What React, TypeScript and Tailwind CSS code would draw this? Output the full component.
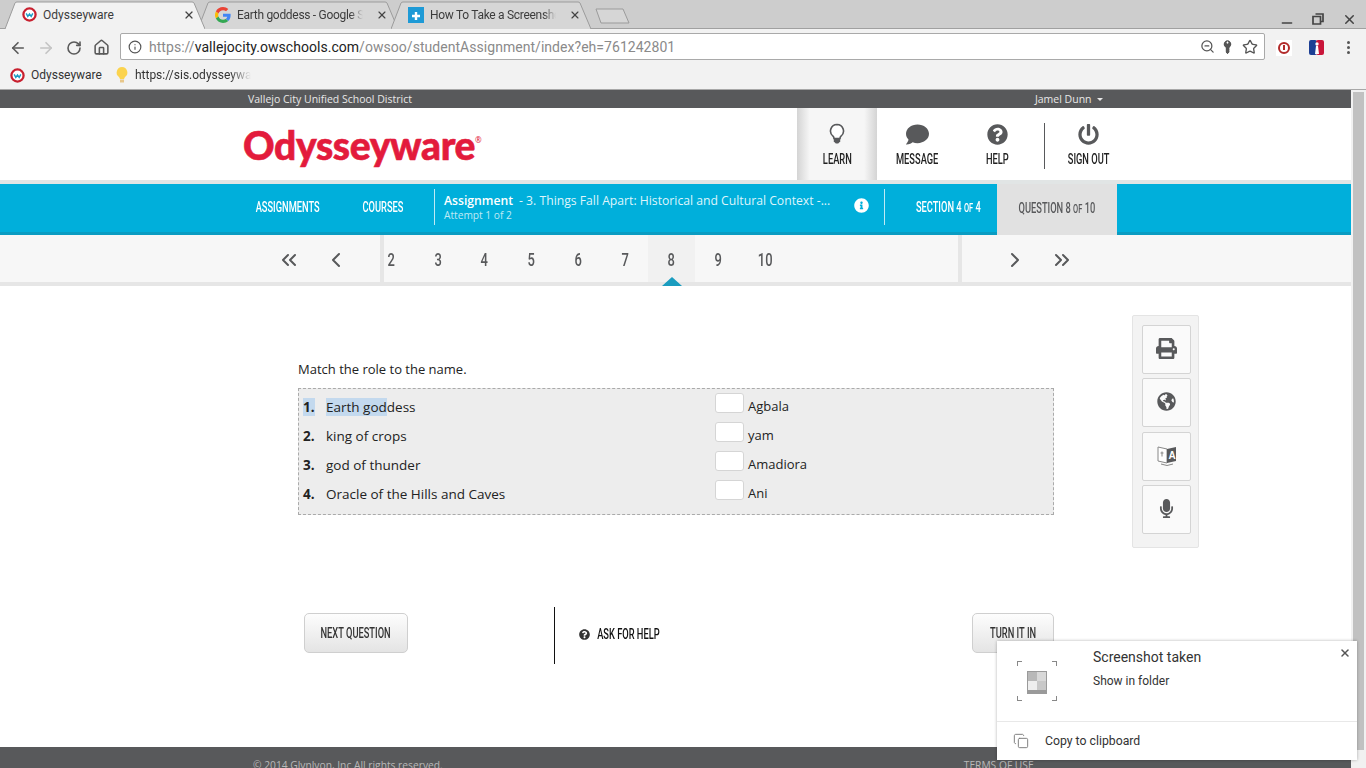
import React from 'react';
import { ArrowLeft, ArrowRight, RotateCw, Home, Info, ZoomOut, Star, ChevronLeft, ChevronRight, ChevronsLeft, ChevronsRight, X, Minus, Copy } from 'lucide-react';
import { FaPrint, FaGlobeAmericas, FaMicrophone, FaComment, FaQuestionCircle, FaInfoCircle, FaPowerOff, FaKey } from 'react-icons/fa';

// Condensed headline font isn't installed, so Roboto gets squeezed horizontally
const Cond = ({ w, children }: { w: string; children: React.ReactNode }) => (
  <span className={`flex justify-center shrink-0 ${w}`}>
    <span className="shrink-0 whitespace-nowrap scale-x-[0.62] font-medium text-[15px] leading-[18px] font-['Roboto',sans-serif]">{children}</span>
  </span>
);

const OwIcon = ({ size = 15 }: { size?: number }) => (
  <svg width={size} height={size} viewBox="0 0 16 16" className="shrink-0">
    <circle cx="8" cy="8" r="6.5" fill="#fff" stroke="#c8202f" strokeWidth="2.4" />
    <path d="M4.5 6.8 L6.2 10 L8 7.5 L9.8 10 L11.5 6.8" fill="none" stroke="#1a9cc4" strokeWidth="1.5" />
  </svg>
);

const GoogleIcon = () => (
  <svg width="16" height="16" viewBox="0 0 48 48" className="shrink-0">
    <path fill="#EA4335" d="M24 9.5c3.5 0 6.700 1.300 9.100 3.500l6.800-6.800C35.800 2.400 30.300 0 24 0 14.600 0 6.500 5.400 2.600 13.200l7.900 6.200C12.400 13.600 17.700 9.500 24 9.500z" />
    <path fill="#4285F4" d="M46.900 24.500c0-1.600-.1-3.100-.4-4.500H24v9h12.900c-.6 3-2.200 5.500-4.800 7.200l7.700 6c4.500-4.200 7.100-10.300 7.100-17.700z" />
    <path fill="#FBBC05" d="M10.500 28.600c-.5-1.400-.8-3-.8-4.600s.3-3.200.8-4.600l-7.900-6.200C.9 16.500 0 20.100 0 24s.9 7.500 2.600 10.800l7.900-6.200z" />
    <path fill="#34A853" d="M24 48c6.500 0 11.900-2.100 15.800-5.800l-7.700-6c-2.100 1.400-4.900 2.300-8.100 2.300-6.300 0-11.600-4.100-13.500-9.900l-7.900 6.200C6.500 42.600 14.600 48 24 48z" />
  </svg>
);

const PlusIcon = () => (
  <svg width="16" height="16" viewBox="0 0 16 16" className="shrink-0">
    <rect width="16" height="16" fill="#1e9ad6" />
    <path d="M8 5v8M4 9h8" stroke="#fff" strokeWidth="2.4" />
  </svg>
);

const BulbIcon = () => (
  <svg width="14" height="18" viewBox="0 0 14 18" className="shrink-0">
    <path d="M7 1a5.500 5.500 0 0 0-3 10l1 2h4l1-2A5.500 5.500 0 0 0 7 1z" fill="#fbd34e" />
    <rect x="5" y="13.500" width="4" height="3" fill="#e8c78a" />
  </svg>
);

const Tab = ({ icon, title, active, fade }: { icon: React.ReactNode; title: string; active?: boolean; fade?: boolean }) => (
  <div className={`relative w-[200px] h-[27px] -mr-[7px] shrink-0 ${active ? 'z-10' : ''}`}>
    <svg className="absolute inset-0" width="200" height="28" viewBox="0 0 200 28">
      <path d="M0 28 L10 2 Q10.500 1 12 1 L187 1 Q188.500 1 189 2 L200 28" fill={active ? '#f2f2f2' : '#d6d6d6'} stroke="#9b9b9b" />
    </svg>
    <div className="relative flex items-center h-full pl-[17px] pr-[10px]">
      {icon}
      <span className={`ml-[6px] w-[127px] overflow-hidden whitespace-nowrap text-[12px] text-[#3c3c3c] font-['Roboto',sans-serif] ${fade ? 'tracking-[-0.3px] [mask-image:linear-gradient(to_right,black_90%,transparent)]' : ''}`}>{title}</span>
      <X size={12} strokeWidth={2.4} className="ml-[13px] text-[#444]" />
    </div>
  </div>
);

const ChromeBar = () => (
  <div className="shrink-0 h-[90px] flex flex-col border-b border-[#a8a8a8] font-['Roboto',sans-serif]">
    <div className="h-[29px] bg-[#cdcdcd] flex items-start pt-[1px] pl-[5px] border-b border-[#a0a0a0]">
      <Tab icon={<OwIcon />} title="Odysseyware" active />
      <Tab icon={<GoogleIcon />} title="Earth goddess - Google Search" fade />
      <Tab icon={<PlusIcon />} title="How To Take a Screenshot" fade />
      <svg width="36" height="17" viewBox="0 0 36 17" className="ml-[11px] mt-[7px] shrink-0">
        <path d="M1 1 H28 L34 15 H6 Z" fill="#d6d6d6" stroke="#9b9b9b" />
      </svg>
      <div className="ml-auto flex items-center pr-[9px] pt-[6px] text-[#444]">
        <Minus size={16} strokeWidth={2.2} className="mt-[8px]" />
        <svg width="12" height="12" viewBox="0 0 12 12" className="ml-[17px] -mt-[1px]">
          <path d="M3.500 1h7.500v7.500h-2M1 3.500h7.500v7.500H1z" fill="none" stroke="#444" strokeWidth="1.700" />
        </svg>
        <X size={15} strokeWidth={2.4} className="ml-[18px]" />
      </div>
    </div>
    <div className="h-[33px] bg-[#f2f2f2] flex items-center pl-[9px] pt-[4px]">
      <ArrowLeft size={18} strokeWidth={2.2} className="text-[#5a5a5a]" />
      <ArrowRight size={18} strokeWidth={2.2} className="ml-[10px] text-[#c4c4c4]" />
      <RotateCw size={16} strokeWidth={2.4} className="ml-[11px] text-[#5a5a5a]" />
      <Home size={17} strokeWidth={2.2} className="ml-[11px] text-[#5a5a5a]" />
      <div className="ml-[10px] w-[1145px] h-[27px] -mt-[2px] bg-white border border-[#a9a9a9] rounded-[2px] flex items-center pl-[7px] pr-[6px]">
        <Info size={14} className="text-[#555]" />
        <span className="ml-[7px] pt-[1px] text-[14px] tracking-[0.04px] text-[#8a8a8a] whitespace-nowrap">
          https://<span className="text-[#222]">vallejocity.owschools.com</span>/owsoo/studentAssignment/index?eh=761242801
        </span>
        <div className="ml-auto flex items-center text-[#555]">
          <ZoomOut size={15} />
          <FaKey size={11} className="-rotate-45 ml-[7px]" />
          <Star size={16} className="ml-[9px]" />
        </div>
      </div>
      <div className="ml-[11px] w-[16px] h-[16px] bg-white flex items-center justify-center">
        <div className="w-[12px] h-[12px] rounded-full border-2 border-[#b22a2a] flex items-center justify-center">
          <span className="w-[2px] h-[5px] bg-[#b22a2a]" />
        </div>
      </div>
      <svg width="15" height="15" viewBox="0 0 15 15" className="ml-[17px]">
        <rect width="8" height="15" rx="2" fill="#1d3f94" />
        <rect x="7" width="8" height="15" rx="2" fill="#c9163a" />
        <circle cx="8" cy="4" r="1.700" fill="#fff" />
        <path d="M7 6l2 0 1 8h-4z" fill="#fff" />
      </svg>
      <div className="ml-[23px] flex flex-col gap-[2px]">
        <span className="w-[3px] h-[3px] rounded-full bg-[#555]" />
        <span className="w-[3px] h-[3px] rounded-full bg-[#555]" />
        <span className="w-[3px] h-[3px] rounded-full bg-[#555]" />
      </div>
    </div>
    <div className="flex-1 bg-[#f2f2f2] flex items-center pl-[10px] pb-[1px] text-[12px] text-[#333]">
      <OwIcon />
      <span className="ml-[6px]">Odysseyware</span>
      <span className="ml-[13px]"><BulbIcon /></span>
      <span className="ml-[6px] w-[116px] overflow-hidden whitespace-nowrap [mask-image:linear-gradient(to_right,black_82%,transparent)]">https://sis.odysseyware.com</span>
    </div>
  </div>
);

const LearnBulb = () => (
  <svg width="16" height="22" viewBox="0 0 16 22">
    <path d="M8 1.500a6.500 6.500 0 0 0-4 11.600c.7.600 1 1.400 1 2.400h6c0-1 .3-1.800 1-2.400A6.500 6.500 0 0 0 8 1.500z" fill="#fff" stroke="#58595b" strokeWidth="1.600" />
    <path d="M4.800 15h6.400v3.500l-2 2h-2.400l-2-2z" fill="#58595b" />
  </svg>
);

const HeadItem = ({ icon, label, w, className }: { icon: React.ReactNode; label: string; w: string; className: string }) => (
  <div className={`flex flex-col items-center pt-[15px] ${className}`}>
    <div className="h-[22px] flex items-center text-[#58595b]">{icon}</div>
    <div className="mt-[5px] text-[#222]"><Cond w={w}>{label}</Cond></div>
  </div>
);

const Header = () => (
  <div className="h-[72px] bg-white flex shrink-0">
    <div className="w-[797px] pl-[243px] flex items-center pt-[3px]">
      <span className="text-[39px] leading-none tracking-[-0.35px] font-black text-[#e31b3c] font-['Lato',sans-serif] [-webkit-text-stroke:0.6px_#e31b3c]">Odysseyware</span>
      <span className="text-[8px] text-[#e31b3c] -mt-[11px]">®</span>
    </div>
    <HeadItem
      className="w-[80px] bg-[linear-gradient(to_right,#d4d4d4,#f6f6f6_16%,#f6f6f6_84%,#d4d4d4)]"
      icon={<LearnBulb />}
      label="LEARN"
      w="w-[27px]"
    />
    <HeadItem className="w-[80px]" icon={<FaComment size={23} />} label="MESSAGE" w="w-[41px]" />
    <HeadItem className="w-[80px] mr-[7px]" icon={<FaQuestionCircle size={21} />} label="HELP" w="w-[21px]" />
    <div className="w-px h-[46px] mt-[15px] bg-[#58595b]" />
    <HeadItem className="w-[87px]" icon={<FaPowerOff size={21} />} label="SIGN OUT" w="w-[42px]" />
  </div>
);

const BlueBar = () => (
  <div className="h-[51px] shrink-0 bg-[#00afdb] border-b-[3px] border-[#0a9cc2] flex text-white">
    <div className="w-[434px] pl-[256px] pb-[2px] flex items-center">
      <Cond w="w-[63px]">ASSIGNMENTS</Cond>
      <span className="w-[43px] shrink-0" />
      <Cond w="w-[42px]">COURSES</Cond>
    </div>
    <div className="w-px h-[36px] mt-[5px] bg-[#bfeaf5]" />
    <div className="w-[449px] pl-[9px] pt-[9px] relative font-['Open_Sans',sans-serif]">
      <div className="text-[12.200px] leading-[15px] whitespace-nowrap">
        <span className="font-semibold">Assignment</span>
        <span className="ml-[6px] text-[#dff5fb]">- 3. Things Fall Apart: Historical and Cultural Context -...</span>
      </div>
      <div className="text-[10.200px] leading-[14px] text-[#bfeaf5]">Attempt 1 of 2</div>
      <FaInfoCircle size={15} className="absolute left-[419px] top-[14px]" />
    </div>
    <div className="w-px h-[36px] mt-[5px] bg-[#bfeaf5]" />
    <div className="w-[112px] pl-[31px] pb-[2px] flex items-center">
      <Cond w="w-[64px]">SECTION 4 <span className="text-[12px]">OF</span> 4</Cond>
    </div>
    <div className="w-[120px] -mb-[3px] pb-[2px] bg-[#e1e1e1] text-[#58595b] flex items-center justify-center">
      <Cond w="w-[74px]">QUESTION 8 <span className="text-[12px]">OF</span> 10</Cond>
    </div>
  </div>
);

const PageNav = () => (
  <div className="h-[51px] shrink-0 bg-[#f7f7f7] border-b-[4px] border-[#e6e6e6] flex text-[#58595b]">
    <div className="w-[384px] border-r-[4px] border-[#e6e6e6] flex items-center pl-[277px] pt-[3px]">
      <ChevronsLeft size={24} strokeWidth={2} />
      <ChevronLeft size={24} strokeWidth={2} className="ml-[23px]" />
    </div>
    <div className="w-[574px] flex text-[18px] font-medium font-['Roboto',sans-serif]">
      {[2, 3, 4, 5, 6, 7, 8, 9, 10].map((n, i) => (
        <div
          key={n}
          className={`w-[47px] shrink-0 flex items-center justify-center pt-[2px] ${i === 0 ? '-ml-[16.500px]' : '-ml-[0.250px]'} ${n === 8 ? 'bg-[#f1f1f1] relative' : ''}`}
        >
          <span className="scale-x-[0.72]">{n}</span>
          {n === 8 && <span className="absolute left-[13.500px] bottom-[-4px] w-0 h-0 border-l-[10px] border-r-[10px] border-b-[9px] border-l-transparent border-r-transparent border-b-[#1a9cbf]" />}
        </div>
      ))}
    </div>
    <div className="flex-1 border-l-[4px] border-[#e6e6e6] flex items-center pl-[41px] pt-[3px]">
      <ChevronRight size={24} strokeWidth={2} />
      <ChevronsRight size={24} strokeWidth={2} className="ml-[23px]" />
    </div>
  </div>
);

const rows = [
  { role: 'Earth goddess', name: 'Agbala' },
  { role: 'king of crops', name: 'yam' },
  { role: 'god of thunder', name: 'Amadiora' },
  { role: 'Oracle of the Hills and Caves', name: 'Ani' },
];

const MatchBox = () => (
  <div className="h-[127px] bg-[#ededed] border border-dashed border-[#aaaaaa] pt-[4px] flex flex-col">
    {rows.map((r, i) => (
      <div key={r.name} className="h-[29px] flex text-[13.500px] text-[#222]">
        <div className="w-[416px] flex items-center pl-[4px]">
          <span className="w-[23px] font-bold">
            <span className={i === 0 ? 'bg-[#c3d9ee]' : ''}>{i + 1}.</span>
          </span>
          {i === 0 ? (
            <span><span className="bg-[#c3d9ee]">Earth god</span>dess</span>
          ) : (
            <span>{r.role}</span>
          )}
        </div>
        <div className="flex items-start">
          <span className="w-[29px] h-[20px] bg-white border border-[#d5d5d5] rounded-[3px]" />
          <span className="ml-[4px] pt-[3px] text-[13px] leading-[20px]">{r.name}</span>
        </div>
      </div>
    ))}
  </div>
);

const TranslateIcon = () => (
  <svg width="22" height="24" viewBox="0 0 22 24">
    <path d="M2 4l9 2v14l-9-2z" fill="#fff" stroke="#888" />
    <path d="M11 6l9-2v14l-9 2z" fill="#58595b" />
    <text x="12.500" y="16" fontSize="10" fontWeight="700" fill="#fff" fontFamily="Liberation Sans">A</text>
    <path d="M4.500 10l3 0M6 8.500v5" stroke="#888" />
    <path d="M5 21q6 3 12 0" fill="none" stroke="#888" />
  </svg>
);

const SideTool = ({ children }: { children: React.ReactNode }) => (
  <div className="w-[49px] h-[49px] shrink-0 pb-[2px] bg-[#fafafa] border border-[#d4d4d4] rounded-[2px] flex items-center justify-center text-[#58595b]">{children}</div>
);

const OwButton = ({ label, textW, className }: { label: string; textW: string; className: string }) => (
  <div className={`h-[40px] rounded-[5px] border border-[#cfcfcf] bg-[linear-gradient(to_bottom,#fdfdfd,#e4e4e4)] flex items-center justify-center text-[#333] ${className}`}>
    <Cond w={textW}>{label}</Cond>
  </div>
);

const Content = () => (
  <div className="flex-1 flex bg-white pl-[298px]">
    <div className="w-[756px] pt-[74px] flex flex-col">
      <p className="text-[13px] leading-[18px] text-[#222] font-['Open_Sans',sans-serif] mb-[10px]">Match the role to the name.</p>
      <div className="font-['Open_Sans',sans-serif]"><MatchBox /></div>
      <div className="mt-[92px] flex items-start">
        <OwButton label="NEXT QUESTION" textW="w-[68px]" className="ml-[6px] mt-[6px] w-[104px]" />
        <div className="ml-[146px] w-px h-[57px] bg-[#111]" />
        <div className="ml-[24px] mt-[18px] flex items-center text-[#111]">
          <FaQuestionCircle size={11} className="text-[#333]" />
          <span className="w-[8px]" />
          <Cond w="w-[60px]">ASK FOR HELP</Cond>
        </div>
        <OwButton label="TURN IT IN" textW="w-[45px]" className="ml-auto mt-[6px] w-[82px]" />
      </div>
    </div>
    <div className="ml-[78px] mt-[29px] w-[67px] h-[233px] bg-[#f3f3f3] border border-[#e4e4e4] rounded-[2px] pt-[9px] pl-[9px] flex flex-col gap-[4.400px]">
      <SideTool><FaPrint size={21} /></SideTool>
      <SideTool><FaGlobeAmericas size={19} /></SideTool>
      <SideTool><TranslateIcon /></SideTool>
      <SideTool><FaMicrophone size={19} /></SideTool>
    </div>
  </div>
);

const Toast = () => (
  <div className="absolute left-[997px] top-[641px] w-[360px] h-[119px] bg-white shadow-[0_0_3px_rgba(0,0,0,0.3)] font-['Roboto',sans-serif] flex flex-col">
    <div className="h-[81px] border-b border-[#e8e8e8] flex relative">
      <div className="ml-[20px] mt-[20px] w-[40px] h-[40px] relative">
        <span className="absolute left-0 top-0 w-[5px] h-[5px] border-l border-t border-[#888]" />
        <span className="absolute right-0 top-0 w-[5px] h-[5px] border-r border-t border-[#888]" />
        <span className="absolute left-0 bottom-0 w-[5px] h-[5px] border-l border-b border-[#888]" />
        <span className="absolute right-0 bottom-0 w-[5px] h-[5px] border-r border-b border-[#888]" />
        <div className="absolute left-[10px] top-[10px] w-[20px] h-[23px] bg-[#9a9a9a] p-[1px] pb-[4px] grid grid-cols-2">
          <span className="bg-[#b8b8b8]" />
          <span className="bg-[#d8d8d8]" />
          <span className="bg-[#eeeeee]" />
          <span className="bg-[#c8c8c8]" />
        </div>
      </div>
      <div className="ml-[36px] pt-[8px]">
        <div className="text-[14px] leading-[17px] text-[#333]">Screenshot taken</div>
        <div className="mt-[8px] text-[12px] leading-[15px] text-[#333]">Show in folder</div>
      </div>
      <X size={12} strokeWidth={3} className="absolute right-[6px] top-[6px] text-[#555]" />
    </div>
    <div className="flex-1 flex items-center pl-[16px]">
      <Copy size={16} strokeWidth={1.4} className="text-[#777]" />
      <span className="ml-[16px] text-[12.250px] text-[#333]">Copy to clipboard</span>
    </div>
  </div>
);

const App: React.FC = () => {
  return (
    <div className="relative w-[1366px] h-[768px] overflow-hidden flex flex-col">
      <ChromeBar />
      <div className="flex-1 flex min-h-0">
        <div className="flex-1 min-w-0 flex flex-col">
          <div className="h-[18px] shrink-0 pt-[1px] bg-[#58595b] flex items-center text-[10.500px] text-[#e8e8e8] font-['Open_Sans',sans-serif]">
            <span className="ml-[248px]">Vallejo City Unified School District</span>
            <span className="ml-[623px]">Jamel Dunn</span>
            <span className="ml-[5px] w-0 h-0 border-l-[3px] border-r-[3px] border-t-[3px] border-l-transparent border-r-transparent border-t-[#e8e8e8]" />
          </div>
          <Header />
          <div className="h-[4px] shrink-0 bg-[#e1e5e5]" />
          <BlueBar />
          <PageNav />
          <Content />
          <div className="h-[21px] shrink-0 bg-[#58595b] flex text-[10.250px] text-[#b8b8b8] pt-[11px] overflow-hidden font-['Open_Sans',sans-serif] whitespace-nowrap">
            <span className="ml-[253px]">© 2014 Glynlyon, Inc All rights reserved.</span>
            <span className="ml-[521px]">TERMS OF USE</span>
          </div>
        </div>
        <div className="w-[15px] shrink-0 bg-[#f1f1f1] pt-[2px] px-[2px] pb-[18px]">
          <div className="h-full bg-[#c1c1c1]" />
        </div>
      </div>
      <Toast />
    </div>
  );
};

export default App;
